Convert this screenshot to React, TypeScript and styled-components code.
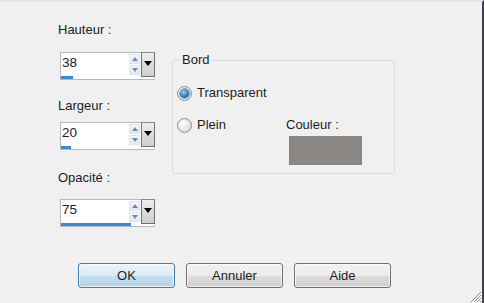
import React from 'react';
import styled, {createGlobalStyle, css} from 'styled-components';

const GlobalStyle = createGlobalStyle`
  html, body {
    margin: 0;
    padding: 0;
    background: #f0f0f0;
  }
  body {
    font-family: "Liberation Sans", Arial, sans-serif;
    font-size: 13px;
    color: #1c1c1c;
  }
`

const Window = styled.div`
  position: relative;
  box-sizing: border-box;
  width: 484px;
  height: 303px;
  background: #f0f0f0;
  border-top: 2px solid #e6e6e6;
  border-right: 2px solid #3d4152;
  display: flex;
  flex-direction: column;
  overflow: hidden;
`

const Content = styled.div`
  display: flex;
  align-items: flex-start;
  padding: 20px 0 0 60px;
`

const LeftColumn = styled.div`
  display: flex;
  flex-direction: column;
  width: 95px;
`

const Field = styled.div<{ $top: number; $gap: number }>`
  display: flex;
  flex-direction: column;
  margin-top: ${p => p.$top}px;
  row-gap: ${p => p.$gap}px;
`

const Label = styled.div`
  line-height: 16px;
  height: 16px;
  white-space: nowrap;
  margin-left: -2px;
`

const SpinBox = styled.div`
  box-sizing: border-box;
  width: 95px;
  height: 28px;
  background: #fff;
  border: 1px solid #b5b8bd;
  border-right-color: #d6d9dd;
  display: flex;
  flex-direction: column;
`

const SpinTop = styled.div`
  display: flex;
  height: 22px;
`

const ValueText = styled.div`
  flex: 1;
  padding: 2px 0 0 1px;
  line-height: 16px;
  font-size: 13.5px;
`

const Arrows = styled.div`
  display: flex;
  flex-direction: column;
  width: 11px;
  margin-right: 1px;
  padding-top: 1px;
  row-gap: 1px;
`

const ArrowBtn = styled.div<{ $dir: 'up' | 'down' }>`
  height: 10px;
  box-sizing: border-box;
  border: 1px solid #dfe4ea;
  background: linear-gradient(#f4f6f9, #e3e8ee);
  display: flex;
  align-items: center;
  justify-content: center;
  &::after {
    content: '';
    width: 0;
    height: 0;
    border-left: 3.5px solid transparent;
    border-right: 3.5px solid transparent;
    ${p => p.$dir === 'up'
      ? css`border-bottom: 4px solid #6a8bb0;`
      : css`border-top: 4px solid #6a8bb0;`}
  }
`

const DropButton = styled.div`
  box-sizing: border-box;
  width: 14px;
  height: 25px;
  margin: -1px -1px 0 0;
  border: 1px solid #707070;
  border-top-color: #8a8a8a;
  background: linear-gradient(#efefef, #dcdcdc 50%, #cfcfcf);
  display: flex;
  justify-content: center;
  padding-top: 8px;
  &::after {
    content: '';
    width: 0;
    height: 0;
    border-left: 4px solid transparent;
    border-right: 4px solid transparent;
    border-top: 5px solid #000;
  }
`

const Track = styled.div`
  height: 3px;
  margin-top: 1px;
  width: 72px;
  display: flex;
`

const Fill = styled.div`
  height: 3px;
  background: #3b8ad8;
`

const Group = styled.fieldset`
  box-sizing: border-box;
  margin: 30px 0 0 17px;
  width: 223px;
  height: 122px;
  padding: 17px 0 0 4px;
  border: 1px solid #d6dde2;
  border-radius: 3px;
  min-width: 0;
`

const Legend = styled.legend`
  padding: 0 2px;
  margin-left: 3px;
  line-height: 16px;
`

const Row = styled.div<{ $mt?: number }>`
  display: flex;
  align-items: flex-start;
  margin-top: ${p => p.$mt ?? 0}px;
`

const RadioLabel = styled.label<{ $width?: number }>`
  display: flex;
  align-items: center;
  column-gap: 5px;
  line-height: 16px;
  ${p => p.$width && css`width: ${p.$width}px;`}
`

const RadioCircle = styled.span<{ $checked?: boolean }>`
  box-sizing: border-box;
  width: 15px;
  height: 15px;
  border-radius: 50%;
  border: 1px solid #8a8c8f;
  background: radial-gradient(circle at 35% 35%, #ffffff, #e3e3e3 60%, #cfcfcf);
  display: flex;
  align-items: center;
  justify-content: center;
  ${p => p.$checked && css`
    &::after {
      content: '';
      width: 9px;
      height: 9px;
      border-radius: 50%;
      background: radial-gradient(circle at 40% 35%, #8fd6f7, #2a7fc0 55%, #134a75);
      box-shadow: 0 0 0 0.5px #1b4e78;
    }
  `}
`

const ColorColumn = styled.div`
  display: flex;
  flex-direction: column;
  row-gap: 3px;
`

const Swatch = styled.div<{ $color: string }>`
  width: 73px;
  height: 29px;
  margin-left: 1px;
  background: ${p => p.$color};
`

const Footer = styled.div`
  display: flex;
  column-gap: 11px;
  padding-left: 78px;
  margin-top: 36px;
`

const Button = styled.button<{ $default?: boolean }>`
  box-sizing: border-box;
  width: 97px;
  height: 25px;
  font-family: "Liberation Sans", Arial, sans-serif;
  font-size: 13px;
  color: #1c1c1c;
  border-radius: 3px;
  border: 1px solid #707070;
  background: linear-gradient(#f2f2f2, #ebebeb 50%, #dddddd 51%, #cfcfcf);
  box-shadow: inset 0 0 0 1px rgba(255, 255, 255, 0.7);
  padding: 0;
  ${p => p.$default && css`
    border-color: #3c7fb1;
    background: linear-gradient(#eaf4fa, #dbeaf3 50%, #c7dfee 51%, #b4d3e6);
  `}
`

const Grip = styled.svg`
  position: absolute;
  right: 0;
  bottom: 0;
`

type SpinProps = { label: string; value: number; fill: number; top: number; gap: number };

function SpinField({label, value, fill, top, gap}: SpinProps) {
  return (
    <Field $top={top} $gap={gap}>
      <Label>{label}</Label>
      <SpinBox>
        <SpinTop>
          <ValueText>{value}</ValueText>
          <Arrows>
            <ArrowBtn $dir="up" />
            <ArrowBtn $dir="down" />
          </Arrows>
          <DropButton />
        </SpinTop>
        <Track>
          <Fill style={{width: fill}} />
        </Track>
      </SpinBox>
    </Field>
  )
}

export default function App() {
  return (
    <Window>
      <GlobalStyle />
      <Content>
        <LeftColumn>
          <SpinField label="Hauteur :" value={38} fill={12} top={0} gap={14} />
          <SpinField label="Largeur :" value={20} fill={10} top={18} gap={8} />
          <SpinField label="Opacité :" value={75} fill={70} top={20} gap={13} />
        </LeftColumn>
        <Group>
          <Legend>Bord</Legend>
          <Row>
            <RadioLabel>
              <RadioCircle $checked />
              Transparent
            </RadioLabel>
          </Row>
          <Row $mt={16}>
            <RadioLabel $width={111}>
              <RadioCircle />
              Plein
            </RadioLabel>
            <ColorColumn>
              <Label>Couleur :</Label>
              <Swatch $color="#8a8684" />
            </ColorColumn>
          </Row>
        </Group>
      </Content>
      <Footer>
        <Button $default>OK</Button>
        <Button>Annuler</Button>
        <Button>Aide</Button>
      </Footer>
      <Grip width="13" height="13" viewBox="0 0 13 13">
        <path d="M12 2 L2 12 M12 5 L5 12 M12 8 L8 12 M12 11 L11 12" stroke="#8c8c8c" strokeWidth="1" />
        <path d="M13 3 L3 13 M13 6 L6 13 M13 9 L9 13" stroke="#ffffff" strokeWidth="1" />
      </Grip>
    </Window>
  )
}
